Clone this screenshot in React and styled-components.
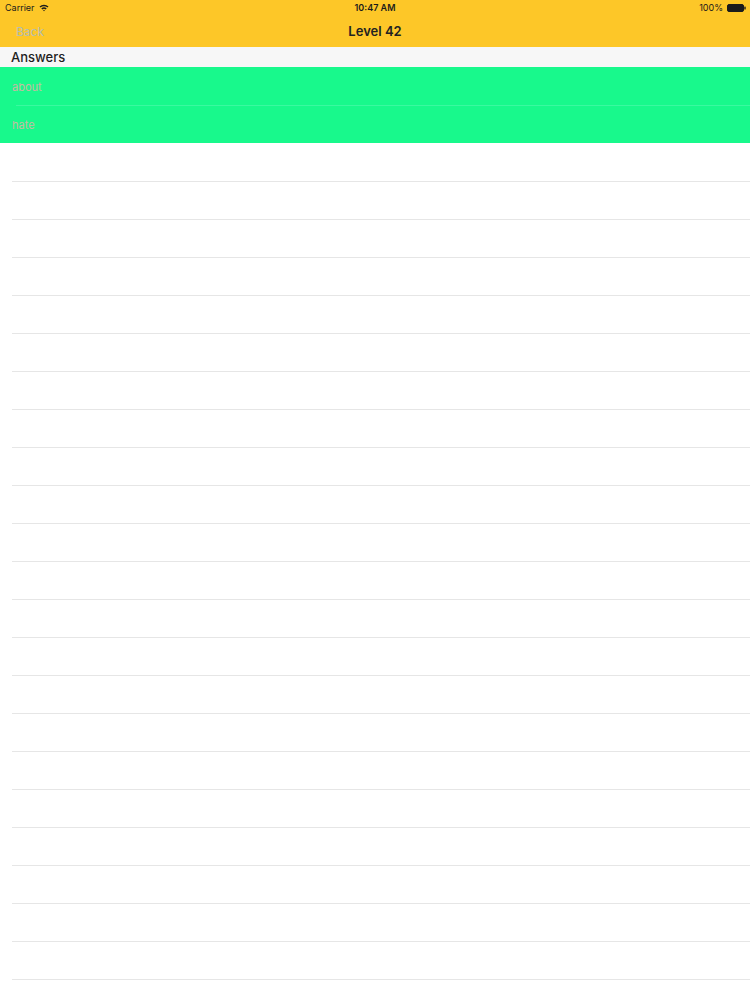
import React from 'react';
import styled, { createGlobalStyle } from 'styled-components';

const GlobalStyle = createGlobalStyle`
  body {
    margin: 0;
    background: #ffffff;
    font-family: Inter, "Liberation Sans", Arial, sans-serif;
  }
`;

const Screen = styled.div`
  width: 750px;
  min-height: 1000px;
  background: #ffffff;
  overflow: hidden;
`;

const TopBar = styled.div`
  background: #fdc728;
  height: 47px;
  display: flex;
  flex-direction: column;
`;

const StatusBar = styled.div`
  height: 15px;
  display: flex;
  align-items: center;
  justify-content: space-between;
  padding: 0 4px 0 5px;
  font-size: 9px;
  color: #1b1b1b;
  position: relative;
`;

const StatusSide = styled.div`
  display: flex;
  align-items: center;
  gap: 4px;
`;

const Clock = styled.div`
  position: absolute;
  left: 0;
  right: 0;
  text-align: center;
  font-weight: 600;
`;

const NavBar = styled.div`
  flex: 1;
  display: flex;
  align-items: center;
  position: relative;
  padding-left: 16px;
`;

const BackButton = styled.span`
  font-size: 12px;
  color: #b3bdb2;
`;

const Title = styled.div`
  position: absolute;
  left: 0;
  right: 0;
  text-align: center;
  font-size: 13px;
  font-weight: 600;
  color: #222;
`;

const SectionHeader = styled.div`
  height: 20px;
  background: #f7f7f7;
  display: flex;
  align-items: center;
  padding-left: 11px;
  font-size: 13px;
  font-weight: 500;
  color: #1e1e1e;
`;

const List = styled.div`
  display: flex;
  flex-direction: column;
`;

const Row = styled.div`
  height: 38px;
  display: flex;
  align-items: center;
  padding: 2px 0 0 12px;
  box-sizing: border-box;
  font-size: 11px;
  color: #c6b9a3;
  background: ${(p) => (p.answered ? '#18f98c' : '#ffffff')};
  position: relative;

  &::after {
    content: '';
    position: absolute;
    z-index: 1;
    left: ${(p) => (p.answered ? '16px' : '12px')};
    right: 0;
    bottom: -1px;
    height: 1px;
    background: ${(p) => (p.answered ? '#3af9a0' : '#e6e6e6')};
    display: ${(p) => (p.last ? 'none' : 'block')};
  }
`;

const Wifi = () => (
  <svg width="10" height="8" viewBox="0 0 10 8">
    <path d="M0.5 2.6 A6.5 6.5 0 0 1 9.5 2.6 L8.5 3.6 A5 5 0 0 0 1.5 3.6 Z" fill="#1b1b1b" />
    <path d="M2.3 4.4 A4 4 0 0 1 7.7 4.4 L6.7 5.4 A2.6 2.6 0 0 0 3.3 5.4 Z" fill="#1b1b1b" />
    <path d="M4.1 6.2 A1.3 1.3 0 0 1 5.9 6.2 L5 7.2 Z" fill="#1b1b1b" />
  </svg>
);

const Battery = () => (
  <svg width="19" height="8" viewBox="0 0 19 8">
    <rect x="0.5" y="0.5" width="16" height="7" rx="1.5" fill="#1b1b1b" stroke="#1b1b1b" />
    <rect x="17.3" y="2.5" width="1.4" height="3" rx="0.5" fill="#1b1b1b" />
  </svg>
);

const answers = ['about', 'hate'];
const emptyRows = Array(22).fill('');

const App = () => {
  return (
    <Screen>
      <GlobalStyle />
      <TopBar>
        <StatusBar>
          <StatusSide>
            Carrier
            <Wifi />
          </StatusSide>
          <Clock>10:47 AM</Clock>
          <StatusSide>
            100%
            <Battery />
          </StatusSide>
        </StatusBar>
        <NavBar>
          <BackButton>Back</BackButton>
          <Title>Level 42</Title>
        </NavBar>
      </TopBar>
      <SectionHeader>Answers</SectionHeader>
      <List>
        {answers.map((word, i) => (
          <Row answered key={word} last={i === answers.length - 1}>
            {word}
          </Row>
        ))}
        {emptyRows.map((_, i) => (
          <Row key={i} />
        ))}
      </List>
    </Screen>
  );
};

export default App;
